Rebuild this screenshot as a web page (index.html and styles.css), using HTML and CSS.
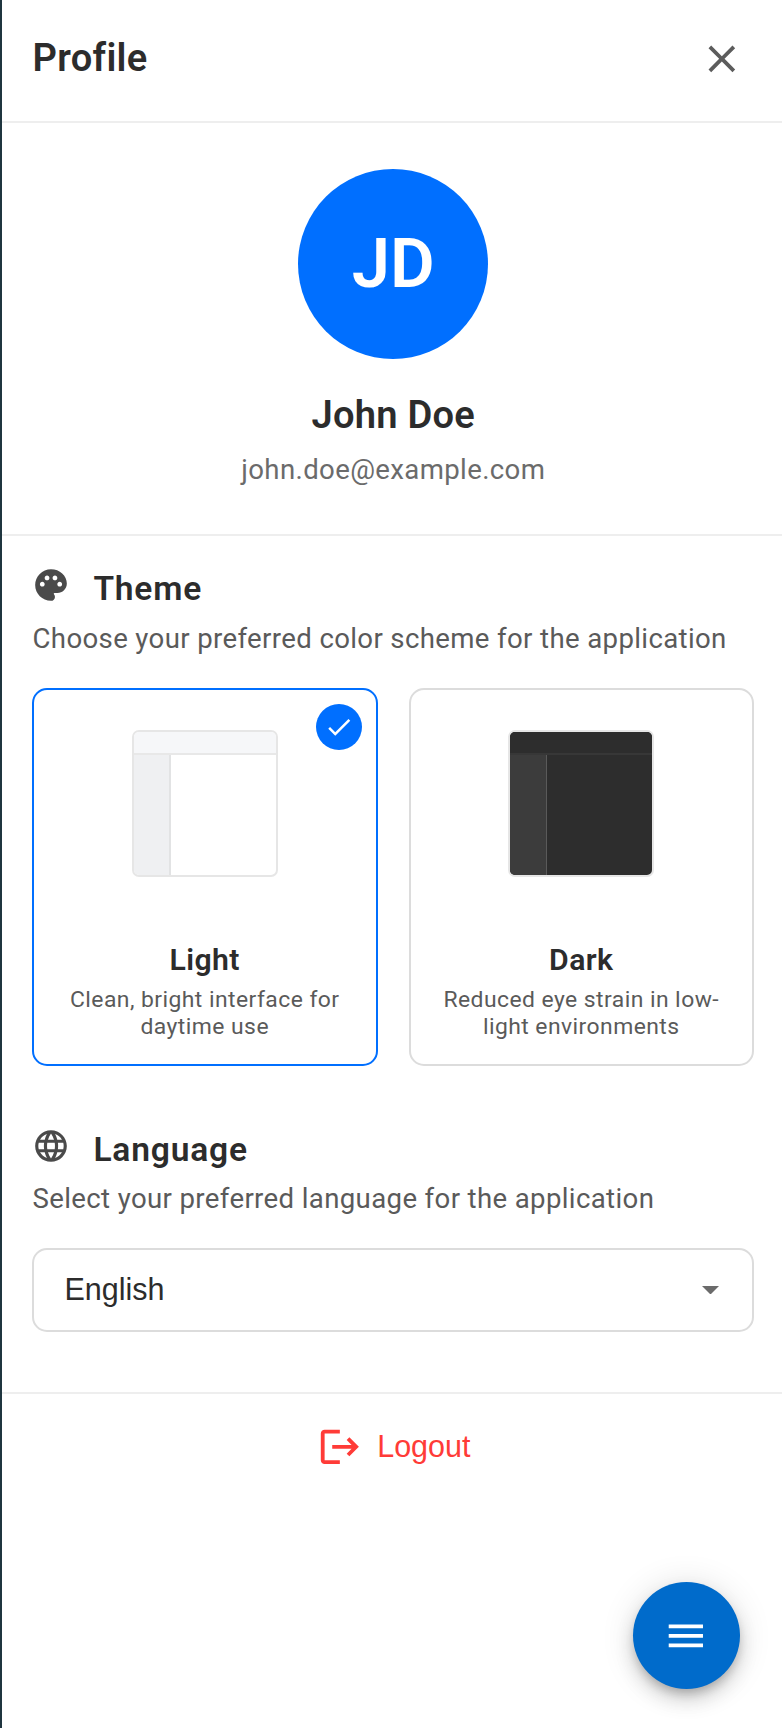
FILE: index.html
```html
<!DOCTYPE html>
<html lang="en">
<head>
<meta charset="utf-8">
<title>Profile</title>
<link rel="stylesheet" href="styles.css">
</head>
<body>
<aside class="drawer">
  <header class="drawer-header">
    <h1 class="drawer-title">Profile</h1>
    <svg class="icon close-icon" viewBox="0 0 24 24"><path d="M19 6.41 17.59 5 12 10.59 6.41 5 5 6.41 10.59 12 5 17.59 6.41 19 12 13.41 17.59 19 19 17.59 13.41 12z"/></svg>
  </header>
  <section class="profile">
    <div class="avatar">JD</div>
    <h2 class="name">John Doe</h2>
    <p class="email">john.doe@example.com</p>
  </section>
  <section class="settings">
    <div class="heading">
      <svg class="heading-icon" viewBox="0 0 24 24"><path d="M12 2C6.49 2 2 6.49 2 12s4.49 10 10 10c1.38 0 2.5-1.12 2.5-2.5 0-.61-.23-1.2-.64-1.67-.08-.1-.13-.21-.13-.33 0-.28.22-.5.5-.5H16c3.31 0 6-2.69 6-6 0-4.96-4.49-9-10-9zm5.5 11c-.83 0-1.5-.67-1.5-1.5s.67-1.5 1.5-1.5 1.5.67 1.5 1.5-.67 1.5-1.5 1.5zm-3-4c-.83 0-1.5-.67-1.5-1.5S13.67 6 14.5 6s1.5.67 1.5 1.5S15.33 9 14.5 9zM5 11.5c0-.83.67-1.5 1.5-1.5s1.5.67 1.5 1.5S7.33 13 6.5 13 5 12.33 5 11.5zm6-4c0 .83-.67 1.5-1.5 1.5S8 8.33 8 7.5 8.67 6 9.5 6s1.5.67 1.5 1.5z"/></svg>
      <h3 class="heading-text">Theme</h3>
    </div>
    <p class="description">Choose your preferred color scheme for the application</p>
    <div class="themes">
      <div class="theme theme-selected">
        <div class="check"><svg class="check-icon" viewBox="0 0 24 24"><path d="M9 16.17 4.83 12l-1.42 1.41L9 19 21 7l-1.41-1.41z"/></svg></div>
        <div class="preview">
          <div class="preview-bar"></div>
          <div class="preview-side"></div>
        </div>
        <h4 class="theme-name">Light</h4>
        <p class="theme-text">Clean, bright interface for<br>daytime use</p>
      </div>
      <div class="theme">
        <div class="preview preview-dark">
          <div class="preview-bar"></div>
          <div class="preview-side"></div>
        </div>
        <h4 class="theme-name">Dark</h4>
        <p class="theme-text">Reduced eye strain in low-<br>light environments</p>
      </div>
    </div>
    <div class="heading heading-language">
      <svg class="heading-icon" viewBox="0 0 24 24"><path d="M11.99 2C6.47 2 2 6.48 2 12s4.47 10 9.99 10C17.52 22 22 17.52 22 12S17.52 2 11.99 2zm6.93 6h-2.95c-.32-1.25-.78-2.45-1.38-3.56 1.84.63 3.37 1.91 4.33 3.56zM12 4.04c.83 1.2 1.48 2.53 1.91 3.96h-3.82c.43-1.43 1.08-2.76 1.91-3.96zM4.26 14C4.1 13.36 4 12.69 4 12s.1-1.36.26-2h3.38c-.08.66-.14 1.32-.14 2s.06 1.34.14 2H4.26zm.82 2h2.95c.32 1.25.78 2.45 1.38 3.56-1.84-.63-3.37-1.9-4.33-3.56zm2.95-8H5.08c.96-1.66 2.49-2.93 4.33-3.56C8.81 5.55 8.35 6.75 8.03 8zM12 19.96c-.83-1.2-1.48-2.53-1.91-3.96h3.82c-.43 1.43-1.08 2.76-1.91 3.96zM14.34 14H9.66c-.09-.66-.16-1.32-.16-2s.07-1.35.16-2h4.68c.09.65.16 1.32.16 2s-.07 1.34-.16 2zm.25 5.56c.6-1.11 1.06-2.31 1.38-3.56h2.95c-.96 1.65-2.49 2.93-4.33 3.56zM16.36 14c.08-.66.14-1.32.14-2s-.06-1.34-.14-2h3.38c.16.64.26 1.31.26 2s-.1 1.36-.26 2h-3.38z"/></svg>
      <h3 class="heading-text">Language</h3>
    </div>
    <p class="description description-language">Select your preferred language for the application</p>
    <div class="select">
      <span>English</span>
      <svg class="caret" viewBox="0 0 10 5"><path d="M0 0h10L5 5z"/></svg>
    </div>
  </section>
  <footer class="logout">
    <svg class="icon" viewBox="0 0 24 24"><path d="m17 7-1.41 1.41L18.17 11H8v2h10.17l-2.58 2.58L17 17l5-5zM4 5h8V3H4c-1.1 0-2 .9-2 2v14c0 1.1.9 2 2 2h8v-2H4V5z"/></svg>
    <span>Logout</span>
  </footer>
</aside>
<div class="fab"><svg class="icon" viewBox="0 0 24 24"><path d="M3 18h18v-2H3v2zm0-5h18v-2H3v2zm0-7v2h18V6H3z"/></svg></div>
</body>
</html>
```
FILE: styles.css
```css
* { box-sizing: border-box; }

body {
  margin: 0;
  background: #fff;
  font-family: Roboto, "Liberation Sans", sans-serif;
  color: #2c2c2c;
}

h1, h2, h3, h4, p { margin: 0; font-weight: 600; }

svg { display: block; fill: currentColor; flex: none; }

.icon { width: 45.7px; height: 45.7px; }

.drawer {
  min-height: 1728px;
  border-left: 2px solid #1f353f;
}

.drawer-header {
  display: flex;
  justify-content: space-between;
  height: 123px;
  padding: 36px 37px 0 30.5px;
  border-bottom: 2px solid #eee;
}

.drawer-title { font-size: 38.1px; line-height: 44px; letter-spacing: .3px; }

.close-icon { color: #5c5c5c; }

.profile {
  display: flex;
  flex-direction: column;
  align-items: center;
  height: 413px;
  padding: 46px 0 0 2.6px;
  border-bottom: 2px solid #eee;
}

.avatar {
  display: flex;
  align-items: center;
  justify-content: center;
  width: 190px;
  height: 190px;
  border-radius: 50%;
  background: #006fff;
  color: #fff;
  font-size: 68.6px;
  font-weight: 600;
  line-height: 80px;
}

.name { margin-top: 34px; font-size: 38.1px; line-height: 44px; letter-spacing: .25px; }

.email {
  margin-top: 16px;
  font-size: 27.6px;
  font-weight: 400;
  line-height: 34px;
  letter-spacing: .36px;
  color: #6b6b6b;
}

.settings {
  height: 858px;
  padding: 30px 28px 0 30px;
  border-bottom: 2px solid #eee;
}

.heading { display: flex; height: 42px; gap: 23px; padding-left: .4px; }

.heading-language { margin-top: 61px; }

.heading-icon { width: 38px; height: 38px; color: #4a4a4a; }

.heading-text { margin-top: 2px; font-size: 33.6px; line-height: 41px; letter-spacing: .8px; }

.description {
  margin-top: 14px;
  padding-left: .5px;
  font-size: 27.6px;
  font-weight: 400;
  line-height: 34px;
  letter-spacing: .36px;
  color: #5a5a5a;
}

.description-language { margin-top: 13px; }

.themes {
  display: grid;
  grid-template-columns: 1fr 1fr;
  gap: 31px;
  margin-top: 32px;
}

.theme {
  position: relative;
  display: flex;
  flex-direction: column;
  align-items: center;
  height: 378px;
  padding-top: 40px;
  border: 2px solid #dcdcdc;
  border-radius: 15px;
  text-align: center;
}

.theme-selected { border-color: #006fff; }

.check {
  position: absolute;
  top: 14.4px;
  right: 14px;
  display: flex;
  align-items: center;
  justify-content: center;
  width: 46px;
  height: 46px;
  border-radius: 50%;
  background: #006fff;
  color: #fff;
}

.check-icon { width: 30px; height: 30px; }

.preview {
  display: flex;
  flex-direction: column;
  width: 146px;
  height: 147px;
  overflow: hidden;
  border: 2px solid #e6e6e6;
  border-radius: 7px;
  background: #fff;
}

.preview-bar { height: 23px; border-bottom: 2px solid #e8e8e8; background: #f6f7f9; }

.preview-side { flex: 1; width: 37px; border-right: 2px solid #e2e3e4; background: #eff0f2; }

.preview-dark { background: #2d2d2d; }

.preview-dark .preview-bar { border-color: #373737; background: #2d2d2d; }

.preview-dark .preview-side { border-right: 1px solid #5a5a5a; background: #3c3c3c; }

.theme-name { margin-top: 65px; font-size: 30.2px; line-height: 36px; letter-spacing: .4px; }

.theme-text {
  margin-top: 8px;
  font-size: 22.9px;
  font-weight: 400;
  line-height: 27px;
  letter-spacing: .45px;
  color: #5a5a5a;
}

.select {
  display: flex;
  align-items: center;
  justify-content: space-between;
  height: 84px;
  margin-top: 32px;
  padding: 0 33px 0 30.5px;
  border: 2px solid #dcdcdc;
  border-radius: 15px;
  font-family: "Liberation Sans", Arial, sans-serif;
  font-size: 30.5px;
}

.select span { padding-bottom: 2px; }

.caret { width: 17px; height: 8.5px; color: #6b6b6b; }

.logout {
  display: flex;
  align-items: center;
  justify-content: center;
  gap: 15px;
  padding: 30px 0 0 3px;
  font-family: "Liberation Sans", Arial, sans-serif;
  font-size: 30.5px;
  color: #ff3b37;
}

.fab {
  position: absolute;
  left: 632.5px;
  top: 1582px;
  display: flex;
  align-items: center;
  justify-content: center;
  width: 107px;
  height: 107px;
  border-radius: 50%;
  background: #006bcb;
  color: #fff;
  box-shadow: 0 6px 10px -2px rgba(0, 0, 0, .2), 0 11px 19px rgba(0, 0, 0, .14), 0 2px 34px rgba(0, 0, 0, .12);
}
```
